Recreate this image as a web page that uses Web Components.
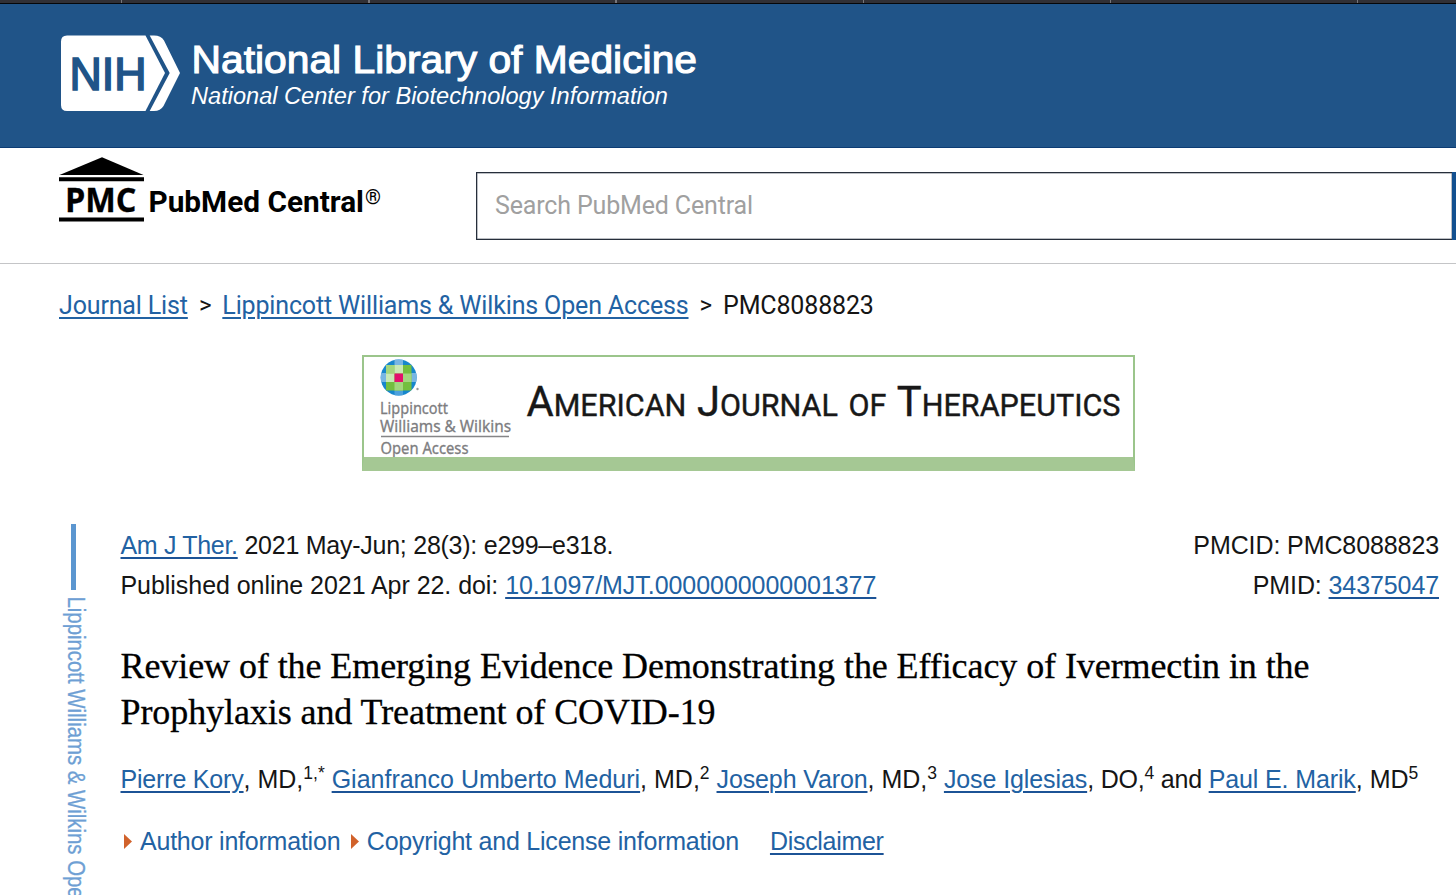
<!DOCTYPE html>
<html lang="en">
<head>
<meta charset="utf-8">
<title>Review of the Emerging Evidence - PMC</title>
<style>
    html, body { margin: 0; height: 100%; }
    body {
        overflow: hidden;
        background: #fff;
        color: #151515;
        font-family: 'Liberation Sans', Arial, sans-serif;
    }
</style>
</head>
<body>
<pmc-page>
    <tab-strip></tab-strip>
    <nlm-header></nlm-header>
    <pmc-search>Search PubMed Central</pmc-search>
    <bread-crumbs>
        <a>Journal List</a>
        <a>Lippincott Williams &amp; Wilkins Open Access</a>
        <span>PMC8088823</span>
    </bread-crumbs>
    <journal-banner name="American Journal of Therapeutics"></journal-banner>
    <article-front></article-front>
</pmc-page>

<script>
class PmcPage extends HTMLElement {
    constructor() {
        super();
        this.attachShadow({ mode: 'open' }).innerHTML = `
            <style>
                :host { display: flex; flex-direction: column; height: 895px; overflow: hidden; }
            </style>
            <slot></slot>
        `;
    }
}

class TabStrip extends HTMLElement {
    constructor() {
        super();
        this.attachShadow({ mode: 'open' }).innerHTML = `
            <style>
                :host {
                    display: block;
                    flex: none;
                    box-sizing: border-box;
                    height: 4px;
                    border-bottom: 1px solid #050608;
                    background: repeating-linear-gradient(90deg, #77767b 0 1.3px, #313035 1.3px 247.2px) -126.2px 0 / 1800px 100% no-repeat;
                }
            </style>
        `;
    }
}

class NlmHeader extends HTMLElement {
    constructor() {
        super();
        this.attachShadow({ mode: 'open' }).innerHTML = `
            <style>
                :host {
                    display: flex;
                    flex: none;
                    box-sizing: border-box;
                    height: 144px;
                    padding: 31px 0 0 60px;
                    background: #205488;
                    border-bottom: 1px solid #0c3c74;
                }
                svg { display: block; }
                text { font-family: 'Liberation Sans', Arial, sans-serif; }
            </style>
            <svg width="660" height="80" viewBox="60 35 660 80">
                <path fill="#fff" d="M67 35.500h78.500L165 73l-19.500 38H67q-6 0-6-6V41.500q0-6 6-6z"/>
                <path fill="#fff" d="M149.700 35.500H154q7 0 10 5L180 73l-16.500 33q-3 5-9.500 5h-4.300L169.700 73z"/>
                <text x="69.500" y="89.500" font-size="46" textLength="77" lengthAdjust="spacingAndGlyphs" fill="#205488" stroke="#205488" stroke-width="1.700">NIH</text>
                <text x="191.500" y="73.300" font-size="38.500" textLength="505.500" lengthAdjust="spacingAndGlyphs" fill="#fff" stroke="#fff" stroke-width="1.100">National Library of Medicine</text>
                <text x="191" y="104" font-size="23.500" font-style="italic" textLength="477" lengthAdjust="spacingAndGlyphs" fill="#fff">National Center for Biotechnology Information</text>
            </svg>
        `;
    }
}

class PmcSearch extends HTMLElement {
    constructor() {
        super();
        this.attachShadow({ mode: 'open' }).innerHTML = `
            <style>
                :host {
                    display: flex;
                    flex: none;
                    box-sizing: border-box;
                    height: 116px;
                    border-bottom: 1px solid #c4c5c7;
                }
                .logo { flex: none; width: 418px; padding: 8px 0 0 58px; }
                svg { display: block; }
                text { font-family: Roboto, sans-serif; font-weight: 700; }
                .field {
                    box-sizing: border-box;
                    flex: none;
                    width: 976px;
                    height: 68px;
                    margin-top: 24px;
                    padding-left: 18px;
                    border: 1px solid #262e3b;
                    border-right: 0;
                    box-shadow: inset 0 0 0 0.5px #7a808a;
                    font: 25px/66px Roboto, sans-serif;
                    letter-spacing: -0.15px;
                    color: #a0a0a0;
                    white-space: nowrap;
                }
                .button { flex: 1; height: 68px; margin-top: 24px; background: #13508f; }
            </style>
            <div class="logo">
                <svg width="330" height="68" viewBox="58 156 330 68">
                    <path d="M102 157.200L143.500 175H59.500z"/>
                    <path d="M59 177.300h85v4H59zM59 217.500h85v4H59z"/>
                    <text x="65" y="212" font-size="33.500" style="font-family: 'Open Sans', sans-serif" stroke="#000" stroke-width="0.300" textLength="71.500" lengthAdjust="spacingAndGlyphs">PMC</text>
                    <text x="148.500" y="212" font-size="30" textLength="215.500" lengthAdjust="spacingAndGlyphs">PubMed Central</text>
                    <text x="365" y="204" font-size="20" style="font-weight: 400" textLength="16" lengthAdjust="spacingAndGlyphs">®</text>
                </svg>
            </div>
            <div class="field"><slot></slot></div>
            <div class="button"></div>
        `;
    }
}

class BreadCrumbs extends HTMLElement {
    constructor() {
        super();
        this.attachShadow({ mode: 'open' }).innerHTML = `
            <style>
                :host {
                    display: flex;
                    flex: none;
                    height: 91px;
                    padding-left: 59px;
                    font: 25px/83px Roboto, sans-serif;
                    letter-spacing: -0.15px;
                    white-space: nowrap;
                }
                .items { display: flex; }
                ::slotted(a) {
                    color: #2262a3;
                    text-decoration: underline;
                    text-decoration-thickness: 1.5px;
                    text-underline-offset: 3px;
                }
                i { font-style: normal; width: 34.5px; text-align: center; font-size: 24px; }
            </style>
            <div class="items"></div>
        `;
    }

    connectedCallback() {
        // one slot per crumb, with a separator between each pair
        const items = this.shadowRoot.querySelector('.items');
        [...this.children].forEach((crumb, i) => {
            crumb.slot = `crumb-${i}`;
            if (i > 0) items.insertAdjacentHTML('beforeend', '<i>&gt;</i>');
            items.insertAdjacentHTML('beforeend', `<slot name="crumb-${i}"></slot>`);
        });
    }
}

class JournalBanner extends HTMLElement {
    connectedCallback() {
        // small caps: large capitals, the rest of each word in smaller ones
        const name = this.getAttribute('name').replace(/[A-Z]/g, '<tspan font-size="43">$&</tspan>');
        this.attachShadow({ mode: 'open' }).innerHTML = `
            <style>
                :host {
                    display: flex;
                    flex: none;
                    box-sizing: border-box;
                    width: 773px;
                    height: 116px;
                    margin-left: 362px;
                    border: 2px solid #9bc58b;
                    border-bottom: 14px solid #a5c894;
                }
                svg { display: block; flex: none; }
                .mark text { font-family: 'Noto Sans', sans-serif; fill: #7d7d7f; stroke: #7d7d7f; stroke-width: 0.3px; }
                .name text {
                    font: 31.5px Roboto, sans-serif;
                    text-transform: uppercase;
                    word-spacing: 3px;
                    fill: #181818;
                    stroke: #181818;
                    stroke-width: 0.4px;
                }
            </style>
            <svg class="mark" width="158" height="100" viewBox="364 357 158 100">
                <defs><clipPath id="globe"><circle cx="398.700" cy="377.500" r="18"/></clipPath></defs>
                <g clip-path="url(#globe)">
                    <path fill="#1787cc" d="M380 359h38v38h-38z"/>
                    <path fill="#78b6e3" d="M394.500 359h8.500v6h-8.500zM380 373h6v9h-6zM411 373h6v9h-6z"/>
                    <path fill="#4ca1dc" d="M394.500 390h8.500v6h-8.500z"/>
                    <path fill="#73bf3f" d="M386 365h25.500v25.500H386z"/>
                    <path fill="#a2d67e" d="M386 365h8.500v8.500H386zM403 373.500h8.500v8.500H403zM394.500 382h8.500v8.500h-8.500z"/>
                    <path fill="#c9e9b5" d="M394.500 365h8.500v8.500h-8.500zM386 373.500h8.500v8.500H386z"/>
                    <path fill="#e3106c" d="M394.500 373.500h8.500v8.500h-8.500z"/>
                </g>
                <circle cx="417.500" cy="389" r="1.200" fill="#999"/>
                <text x="380" y="414" font-size="16" textLength="68" lengthAdjust="spacingAndGlyphs">Lippincott</text>
                <text x="380" y="432" font-size="16" textLength="131" lengthAdjust="spacingAndGlyphs">Williams &amp; Wilkins</text>
                <path d="M381 436.500h128" stroke="#858587" stroke-width="1.500"/>
                <text x="380.500" y="453.500" font-size="16" textLength="88" lengthAdjust="spacingAndGlyphs">Open Access</text>
            </svg>
            <svg class="name" width="606" height="100" viewBox="522 357 606 100">
                <text x="526.500" y="416" textLength="594" lengthAdjust="spacingAndGlyphs">${name}</text>
            </svg>
        `;
    }
}

class ArticleFront extends HTMLElement {
    constructor() {
        super();
        this.attachShadow({ mode: 'open' }).innerHTML = `
            <style>
                :host {
                    display: flex;
                    flex: 1;
                    padding-top: 53px;
                    font-size: 25px;
                    line-height: 40px;
                    white-space: nowrap;
                }
                svg { display: block; }
                .rail { flex: none; width: 120.5px; }
                .rail text { font: 24.5px 'Liberation Sans', Arial, sans-serif; fill: #6e9fd4; stroke: #6e9fd4; stroke-width: 0.3px; }
                .body { flex: none; width: 1318.5px; }
                a, .link { color: #2262a3; }
                a {
                    text-decoration: underline #1c5396;
                    text-decoration-thickness: 1.5px;
                    text-underline-offset: 3px;
                }
                .row { display: flex; justify-content: space-between; letter-spacing: -0.1px; }
                .cite { padding-top: 1px; }
                h1 {
                    margin: 38px 0 0;
                    font: 400 36px/46px 'Liberation Serif', 'Times New Roman', serif;
                    letter-spacing: -0.08px;
                    color: #000;
                    -webkit-text-stroke: 0.3px #000;
                }
                .authors { margin-top: 24px; }
                sup { font-size: 17.5px; line-height: 0; vertical-align: 9px; }
                .info { display: flex; align-items: center; margin-top: 22px; letter-spacing: -0.22px; }
                .info svg { margin: 1px 8px 0 3.5px; }
                .info svg + .link { margin-right: 7px; }
                .info a { margin-left: 24px; letter-spacing: -0.3px; }
            </style>
            <div class="rail">
                <svg width="120" height="371" viewBox="0 524 120 371">
                    <path fill="#5b96d0" d="M71 524h5v66h-5z"/>
                    <text transform="translate(68 596.500) rotate(90) scale(0.832 1)">Lippincott Williams &amp; Wilkins Open Access</text>
                </svg>
            </div>
            <div class="body">
                <div class="row cite">
                    <span style="letter-spacing: -0.25px"><a style="letter-spacing: -0.32px">Am J Ther.</a> 2021 May-Jun; 28(3): e299–e318.</span>
                    <span>PMCID: PMC8088823</span>
                </div>
                <div class="row">
                    <span>Published online 2021 Apr 22. doi: <a>10.1097/MJT.0000000000001377</a></span>
                    <span>PMID: <a>34375047</a></span>
                </div>
                <h1>Review of the Emerging Evidence Demonstrating the Efficacy of Ivermectin in the<br>Prophylaxis and Treatment of COVID-19</h1>
                <div class="authors"><a style="letter-spacing: -0.18px">Pierre Kory</a>, MD,<sup>1,*</sup> <a>Gianfranco Umberto Meduri</a>, MD,<sup>2</sup> <a style="letter-spacing: -0.12px">Joseph Varon</a>, MD,<sup>3</sup> <a style="letter-spacing: -0.1px">Jose Iglesias</a><span style="letter-spacing: -0.2px">, DO,<sup>4</sup> and </span><a style="letter-spacing: -0.12px">Paul E. Marik</a>, MD<sup>5</sup></div>
                <div class="info">
                    <svg width="8" height="15"><path fill="#d1622b" d="M0 0l8 7.500L0 15z"/></svg><span class="link">Author information</span>
                    <svg width="8" height="15"><path fill="#d1622b" d="M0 0l8 7.500L0 15z"/></svg><span class="link">Copyright and License information</span>
                    <a>Disclaimer</a>
                </div>
            </div>
        `;
        // the citation's first part sits a touch wider than its link
        this.shadowRoot.querySelectorAll('.row')[1].firstElementChild.style.letterSpacing = '-0.05px';
    }
}

customElements.define('pmc-page', PmcPage);
customElements.define('tab-strip', TabStrip);
customElements.define('nlm-header', NlmHeader);
customElements.define('pmc-search', PmcSearch);
customElements.define('bread-crumbs', BreadCrumbs);
customElements.define('journal-banner', JournalBanner);
customElements.define('article-front', ArticleFront);
</script>
</body>
</html>
